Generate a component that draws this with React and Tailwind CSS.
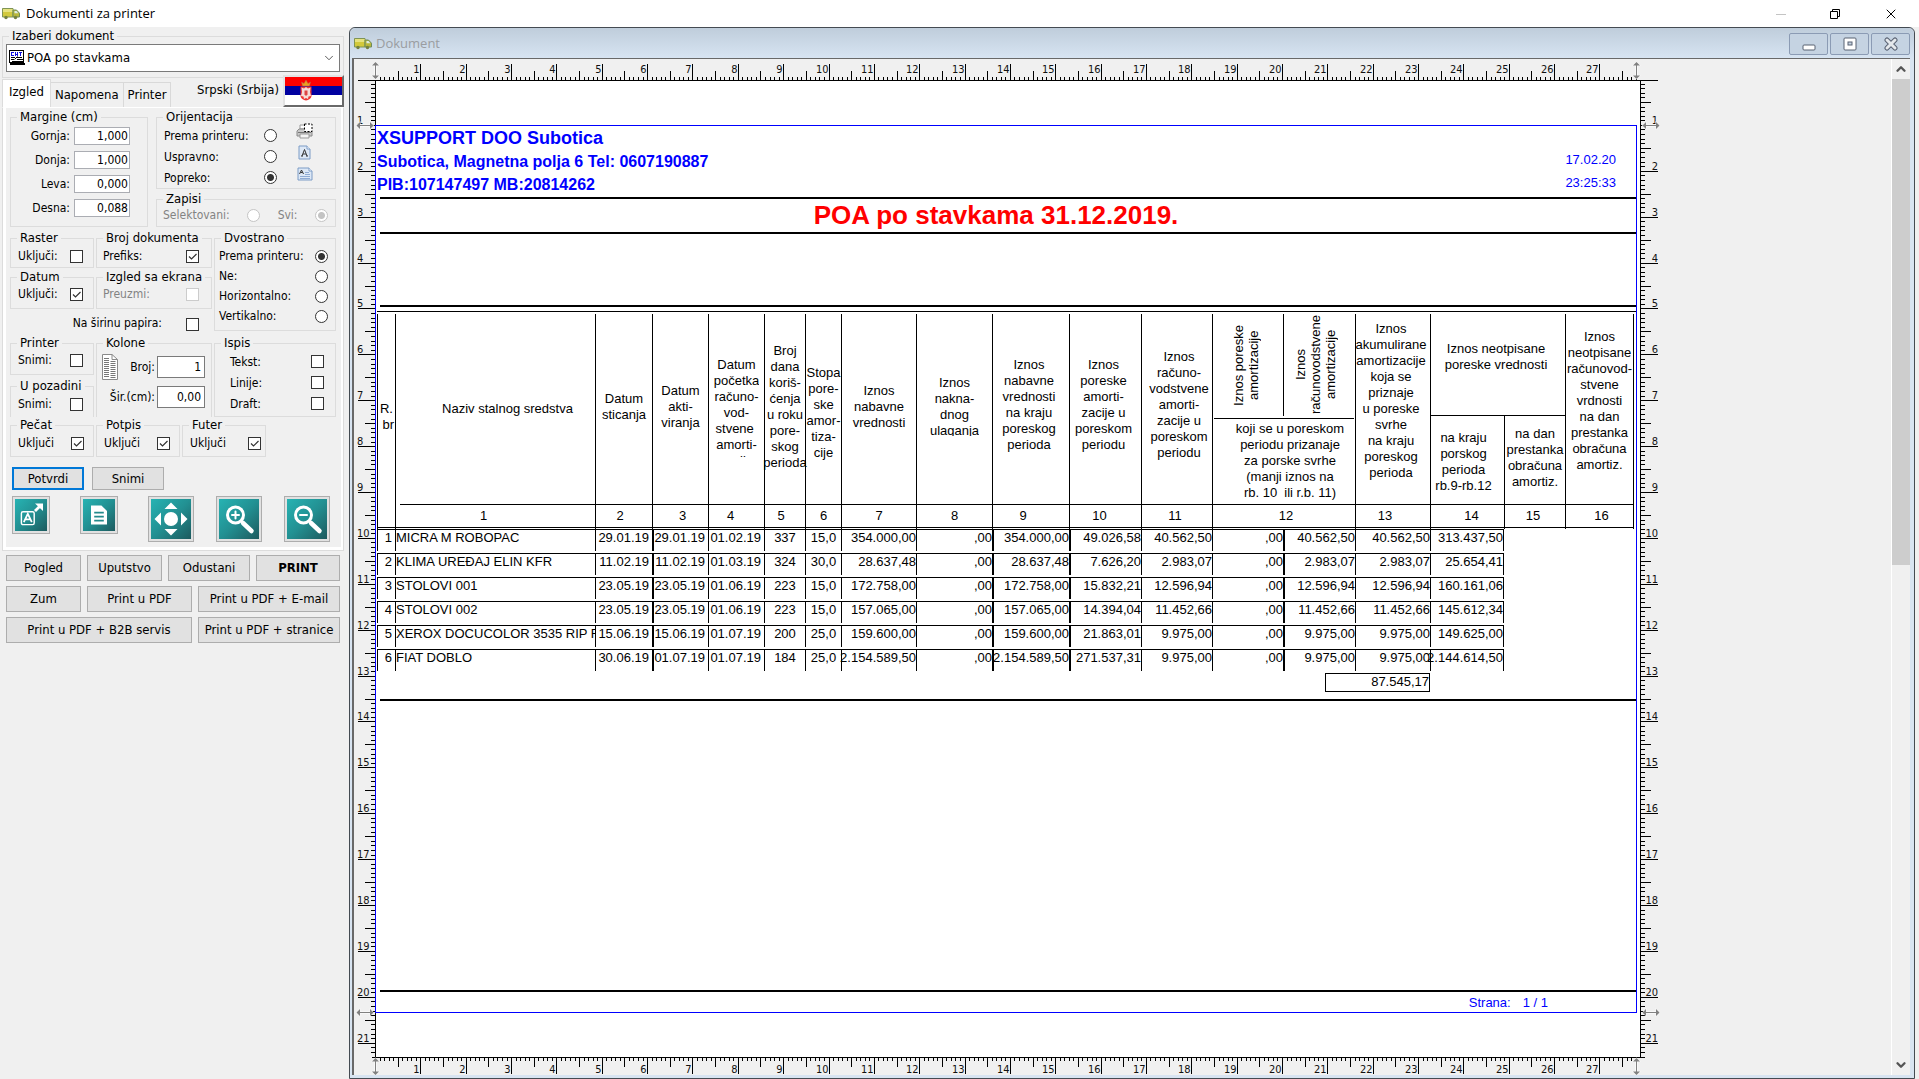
import React, { useState } from 'react';
import { ChevronDown, ChevronUp, X } from 'lucide-react';

const CM_X = 45.35;
const CM_Y = 45.89;

const COLUMN_WIDTHS = [18, 200, 57, 56, 56, 41, 36, 75, 76, 77, 72, 71, 71, 72, 75, 74, 61, 68];

const ROWS = [
  ['1', 'MICRA M ROBOPAC', '29.01.19', '29.01.19', '01.02.19', '337', '15,0', '354.000,00', ',00', '354.000,00', '49.026,58', '40.562,50', ',00', '40.562,50', '40.562,50', '313.437,50'],
  ['2', 'KLIMA UREĐAJ ELIN KFR', '11.02.19', '11.02.19', '01.03.19', '324', '30,0', '28.637,48', ',00', '28.637,48', '7.626,20', '2.983,07', ',00', '2.983,07', '2.983,07', '25.654,41'],
  ['3', 'STOLOVI 001', '23.05.19', '23.05.19', '01.06.19', '223', '15,0', '172.758,00', ',00', '172.758,00', '15.832,21', '12.596,94', ',00', '12.596,94', '12.596,94', '160.161,06'],
  ['4', 'STOLOVI 002', '23.05.19', '23.05.19', '01.06.19', '223', '15,0', '157.065,00', ',00', '157.065,00', '14.394,04', '11.452,66', ',00', '11.452,66', '11.452,66', '145.612,34'],
  ['5', 'XEROX DOCUCOLOR 3535 RIP FI', '15.06.19', '15.06.19', '01.07.19', '200', '25,0', '159.600,00', ',00', '159.600,00', '21.863,01', '9.975,00', ',00', '9.975,00', '9.975,00', '149.625,00'],
  ['6', 'FIAT DOBLO', '30.06.19', '01.07.19', '01.07.19', '184', '25,0', '2.154.589,50', ',00', '2.154.589,50', '271.537,31', '9.975,00', ',00', '9.975,00', '9.975,00', '2.144.614,50'],
];

const THICK_COLUMNS = [3, 9, 10, 13];

const cellAlign = (col) => {
  if (col === 0) return 'justify-end pr-[3px]';
  if (col === 1) return 'justify-start overflow-hidden';
  if (col < 5) return 'justify-end pr-[3px]';
  if (col < 7) return 'justify-center';
  return 'justify-end';
};

// numbered strip under the column titles
const COLUMN_NUMBERS = [
  { n: 1, cls: 'pr-6' },
  { n: 2, cls: 'pr-2' },
  { n: 3, cls: 'pl-1' },
  { n: 4, cls: 'pr-3' },
  { n: 5, cls: 'pr-2' },
  { n: 6, cls: '' },
  { n: 7, cls: '' },
  { n: 8, cls: '' },
  { n: 9, cls: 'pr-4' },
  { n: 10, cls: 'pr-3' },
  { n: 11, cls: 'pr-1' },
  { n: 12, cls: 'pl-1', span: 2 },
  { n: 13, cls: 'pr-4' },
  { n: 14, cls: 'pl-2' },
  { n: 15, cls: 'pr-1' },
  { n: 16, cls: 'pl-1' },
];

const TruckIcon = () => (
  <svg width="18" height="13" viewBox="0 0 18 13" className="shrink-0">
    <path d="M0.5 1.5h10.5v8.5H0.5z" fill="#d2c93c" stroke="#7f9455" />
    <path d="M1 2h9.5v3H1z" fill="#e6e27e" />
    <path d="M11 3h3.5l3 3.2V10H11z" fill="#b9b83a" stroke="#6c8a5c" />
    <path d="M12.5 4h2l1.8 2.2h-3.8z" fill="#dcebe8" />
    <circle cx="4" cy="10.5" r="1.7" fill="#74803e" />
    <circle cx="13.5" cy="10.5" r="1.7" fill="#74803e" />
  </svg>
);

const FlagIcon = () => (
  <svg width="57" height="28" viewBox="0 0 57 28">
    <rect width="57" height="9.5" fill="#f00" />
    <rect y="9" width="57" height="9.5" fill="#0000a0" />
    <rect y="18" width="57" height="10" fill="#fff" />
    <path d="M15.5 9.5h11v9c0 3-3 4.500-5.500 5c-2.500-.5-5.500-2-5.500-5z" fill="#e33" />
    <path d="M21 10l2 1.500 2.500-1-.5 4.500 1 4-2.500.5-.5 2.500-2-1-2 1-.5-2.500-2.500-.5 1-4-.5-4.500 2.500 1z" fill="#f4dcd8" />
    <path d="M19.500 13.500h3v4l-1.500 1.500-1.500-1.500z" fill="#d44" />
    <path d="M17.500 9l-1-4 2.500 1.500L21 3l2 3.500L25.500 5l-1 4z" fill="#e8a020" stroke="#b55" strokeWidth=".5" />
  </svg>
);

const ListIcon = () => (
  <svg width="17" height="15" viewBox="0 0 17 15" shapeRendering="crispEdges">
    <path d="M1.500.500h14v12h-14z" fill="#fff" stroke="#000" />
    <path d="M3 2h3v1H4v2h2v1H3zM7 2h1v2h1V2h1v4H9V5H8v1H7zM11 2h3v1h-1v3h-1V3h-1z" fill="#1010e0" />
    <path d="M3 7.500h4M9 7.500h5M3 9.500h3M9 9.500h6M4 11.500h11" stroke="#000" />
    <path d="M9.500 6.500L6.500 9.500" stroke="#000" shapeRendering="auto" />
    <path d="M2 14h15" stroke="#000" strokeWidth="2" />
  </svg>
);

const PrinterIcon = () => (
  <svg width="17" height="17" viewBox="0 0 17 17">
    <path d="M4 6V2h6v4z" fill="#fff" stroke="#999" />
    <path d="M1 8l2-2h11l2 2v5H1z" fill="#c9c9c9" stroke="#8a8a8a" />
    <path d="M2 9.500h13" stroke="#777" />
    <path d="M4 11h9v4H4z" fill="#f4f4f4" stroke="#999" />
    <rect x="8.500" y="1" width="7.500" height="7.500" fill="#fff" stroke="#000" strokeDasharray="2 1.500" />
  </svg>
);

const PortraitIcon = () => (
  <svg width="13" height="15" viewBox="0 0 13 15">
    <path d="M1 1h8l3 3v10H1z" fill="#dde8f6" stroke="#7d9cc6" />
    <path d="M9 1v3h3" fill="#fff" stroke="#7d9cc6" />
    <path d="M4 11l2.500-6.500L9 11M5 9h3M3 11h2M8 11h2" fill="none" stroke="#333" />
  </svg>
);

const LandscapeIcon = () => (
  <svg width="16" height="14" viewBox="0 0 16 14">
    <path d="M1 1h11l3 3v9H1z" fill="#dde8f6" stroke="#7d9cc6" />
    <path d="M12 1v3h3" fill="#fff" stroke="#7d9cc6" />
    <path d="M2.500 7L4.500 3l2 4M3.500 5.500h2" fill="none" stroke="#333" />
    <path d="M8 5.500h4M8 7.500h5M3 9.500h10M3 11.500h10" stroke="#8fabd3" />
  </svg>
);

const ColumnsIcon = () => (
  <svg width="16" height="26" viewBox="0 0 16 26">
    <path d="M.5.500h9.500l5.500 5V25.500H.5z" fill="#fff" stroke="#8a8a8a" />
    <path d="M10 .5v5h5.500" fill="none" stroke="#8a8a8a" />
    <path d="M4.500 4v20M11 7v17" stroke="#777" strokeWidth="5" strokeDasharray="1 1" />
  </svg>
);

const Teal = ({ size, children }) => (
  <svg width={size} height={size} viewBox="0 0 40 40">
    <defs>
      <linearGradient id={`teal${size}`} x1="0" y1="0" x2="1" y2="1">
        <stop offset="0" stopColor="#27b3b3" />
        <stop offset=".5" stopColor="#229092" />
        <stop offset="1" stopColor="#1d5a5e" />
      </linearGradient>
    </defs>
    <rect width="40" height="40" fill={`url(#teal${size})`} />
    {children}
  </svg>
);

const TOOLS = [
  {
    label: 'Font',
    size: 32,
    art: (
      <g fill="none" stroke="#fff">
        <rect x="8" y="16" width="16" height="16" rx="2" strokeWidth="1.800" />
        <path d="M11 29l5-10.500L21 29M13 25.500h6" strokeWidth="2.200" />
        <path d="M25 15l7-7" strokeWidth="3.500" />
        <path d="M25 5.500h10V15z" fill="#fff" stroke="none" />
      </g>
    ),
  },
  {
    label: 'Strana',
    size: 32,
    art: (
      <g>
        <path d="M10 8h13l7 7v17H10z" fill="#fff" />
        <path d="M14 17h12M14 22h12M14 27h12" stroke="#238a8c" strokeWidth="2.200" />
      </g>
    ),
  },
  {
    label: 'Pomeranje',
    size: 40,
    art: (
      <g fill="#fff">
        <circle cx="20" cy="20" r="7" />
        <path d="M20 3.500l6.500 6.500h-13zM20 36.500l6.500-6.500h-13zM3.500 20l6.500-6.500v13zM36.500 20L30 13.500v13z" />
      </g>
    ),
  },
  {
    label: 'Uvećaj',
    size: 40,
    art: (
      <g fill="none" stroke="#fff" strokeLinecap="round">
        <circle cx="16.500" cy="16" r="8" strokeWidth="3" />
        <path d="M24 24l8.500 8" strokeWidth="4.500" />
        <path d="M13 16h7M16.500 12.500v7" strokeWidth="2" />
      </g>
    ),
  },
  {
    label: 'Umanji',
    size: 40,
    art: (
      <g fill="none" stroke="#fff" strokeLinecap="round">
        <circle cx="16.500" cy="16" r="8" strokeWidth="3" />
        <path d="M24 24l8.500 8" strokeWidth="4.500" />
        <path d="M13 16h7" strokeWidth="2" />
      </g>
    ),
  },
];

const Group = ({ title, className = '', body = '', children }) => (
  <fieldset className={`min-w-0 border border-[#dcdcdc] ${className}`}>
    <legend className="ml-[6px] px-[3px] text-[13px] leading-4 whitespace-nowrap">{title}</legend>
    <div className={body}>{children}</div>
  </fieldset>
);

const CheckBox = ({ id, checked = false, disabled = false }) => {
  const [on, setOn] = useState(checked);
  return (
    <span className="relative block size-[13px] shrink-0">
      <input
        id={id}
        type="checkbox"
        checked={on}
        disabled={disabled}
        onChange={(e) => setOn(e.target.checked)}
        className="block size-[13px] appearance-none border border-[#333] bg-white disabled:border-[#ccc]"
      />
      {on && (
        <svg viewBox="0 0 13 13" className="pointer-events-none absolute inset-0 size-[13px]">
          <path d="M3 6.500l2.500 2.500L10.500 4" fill="none" stroke="#333" strokeWidth="1.200" />
        </svg>
      )}
    </span>
  );
};

const Radio = ({ id, name, value, defaultChecked, disabled }) => (
  <input
    id={id}
    type="radio"
    name={name}
    value={value}
    defaultChecked={defaultChecked}
    disabled={disabled}
    className="block size-[13px] shrink-0 appearance-none rounded-full border border-[#333] bg-white checked:bg-[radial-gradient(circle,#333_0,#333_3px,#fff_4px)] disabled:border-[#c4c4c4] disabled:checked:bg-[radial-gradient(circle,#c4c4c4_0,#c4c4c4_3px,#fff_4px)]"
  />
);

const CheckRow = ({ id, label, checked, disabled, className = '' }) => (
  <div className={`flex items-center justify-between ${className}`}>
    <label htmlFor={id} className={disabled ? 'text-[#838383]' : ''}>{label}</label>
    <CheckBox id={id} checked={checked} disabled={disabled} />
  </div>
);

const MarginField = ({ id, label, value }) => (
  <div className="flex items-center justify-end gap-1">
    <label htmlFor={id}>{label}</label>
    <input
      id={id}
      defaultValue={value}
      className="h-[18px] w-14 border border-[#abadb3] bg-white pr-px text-right outline-none"
    />
  </div>
);

const PushButton = ({ className = '', children }) => (
  <button type="button" className={`flex items-center justify-center border border-[#adadad] bg-[#e1e1e1] text-[13px] whitespace-nowrap hover:bg-[#e5f1fb] ${className}`}>
    {children}
  </button>
);

const SidePanel = () => {
  const [tab, setTab] = useState('Izgled');

  return (
    <aside className="w-[349px] shrink-0 pt-px pr-[5px] pl-[2px] font-['DejaVu_Sans_Condensed','DejaVu_Sans',sans-serif] text-[12px] leading-4">
      <Group title={<label htmlFor="dokument">Izaberi dokument</label>} className="h-[50px]" body="px-[3px]">
        <div className="relative">
          <select id="dokument" className="block h-7 w-full appearance-none border border-[#7a7a7a] bg-white pl-5 text-[13px] outline-none">
            <option>POA po stavkama</option>
          </select>
          <span className="pointer-events-none absolute left-[2px] top-[6px]"><ListIcon /></span>
          <ChevronDown className="pointer-events-none absolute right-1 top-[7px] size-3.5 text-[#444]" strokeWidth={1.5} />
        </div>
      </Group>

      <div className="flex h-[29px] items-end">
        <div role="tablist" className="flex items-end text-[13px]">
          {['Izgled', 'Napomena', 'Printer'].map((name) => (
            <button
              key={name}
              type="button"
              role="tab"
              aria-selected={tab === name}
              onClick={() => setTab(name)}
              className={tab === name
                ? 'h-7 border border-b-0 border-[#dcdcdc] bg-white px-[6px] pb-1'
                : 'h-[25px] border border-b-0 border-l-0 border-[#d9d9d9] bg-[#f0f0f0] px-1'}
            >
              {name}
            </button>
          ))}
        </div>
        <span className="ml-auto mr-1 self-start pt-1 text-[13px]">Srpski (Srbija)</span>
        <button type="button" aria-label="Jezik" className="h-8 border-2 border-t-[#e3e3e3] border-l-[#e3e3e3] border-r-[#696969] border-b-[#696969]">
          <FlagIcon />
        </button>
      </div>

      <div className="border border-[#dcdcdc] border-t-white">
        <div className="border-[3px] border-r-2 border-t-0 border-white pl-[4px] pr-[5px] pt-px pb-[5px]">
          <div className="flex gap-2">
            <Group title="Margine (cm)" className="h-[118px] w-[138px]" body="flex flex-col gap-[6px] pt-[2px] pr-[17px]">
              <MarginField id="gornja" label="Gornja:" value="1,000" />
              <MarginField id="donja" label="Donja:" value="1,000" />
              <MarginField id="leva" label="Leva:" value="0,000" />
              <MarginField id="desna" label="Desna:" value="0,088" />
            </Group>
            <div className="flex flex-1 flex-col gap-[2px]">
              <Group title="Orijentacija" className="h-20" body="pl-[7px] pr-[22px]">
                {[
                  ['o-printer', 'Prema printeru:', <PrinterIcon />],
                  ['o-uspravno', 'Uspravno:', <PortraitIcon />],
                  ['o-popreko', 'Popreko:', <LandscapeIcon />],
                ].map(([id, label, icon], i) => (
                  <div key={id} className="flex h-[21px] items-center">
                    <label htmlFor={id} className="flex-1">{label}</label>
                    <Radio id={id} name="orijentacija" value={id} defaultChecked={i === 2} />
                    <span className="flex w-9 justify-end pb-2">
                      <span className="flex w-[17px] justify-center">{icon}</span>
                    </span>
                  </div>
                ))}
              </Group>
              <Group title="Zapisi" className="h-9" body="flex items-center justify-between pl-[6px] pr-[7px] text-[#838383]">
                <label htmlFor="selektovani">Selektovani:</label>
                <Radio id="selektovani" name="zapisi" value="selektovani" disabled />
                <label htmlFor="svi">Svi:</label>
                <Radio id="svi" name="zapisi" value="svi" defaultChecked disabled />
              </Group>
            </div>
          </div>

          <div className="mt-[3px] flex gap-[2px]">
            <div className="w-[202px]">
              <div className="flex gap-[2px]">
                <Group title="Raster" className="h-[38px] w-[84px]" body="pl-[7px] pr-[10px]">
                  <CheckRow id="raster" label="Uključi:" className="h-5" />
                </Group>
                <Group title="Broj dokumenta" className="h-[38px] flex-1" body="pl-[6px] pr-[12px]">
                  <CheckRow id="prefiks" label="Prefiks:" checked className="h-5" />
                </Group>
              </div>
              <div className="mt-px flex gap-[2px]">
                <Group title="Datum" className="h-10 w-[84px]" body="pl-[7px] pr-[10px]">
                  <CheckRow id="datum" label="Uključi:" checked className="h-[18px]" />
                </Group>
                <Group title="Izgled sa ekrana" className="h-10 flex-1" body="pl-[6px] pr-[12px]">
                  <CheckRow id="preuzmi" label="Preuzmi:" disabled className="h-[18px]" />
                </Group>
              </div>
              <div className="flex h-[22px] items-end justify-end gap-6 pr-[13px]">
                <label htmlFor="sirina">Na širinu papira:</label>
                <CheckBox id="sirina" />
              </div>
            </div>
            <Group title="Dvostrano" className="h-[101px] flex-1" body="pl-1 pr-[7px]">
              {['Prema printeru:', 'Ne:', 'Horizontalno:', 'Vertikalno:'].map((label, i) => (
                <div key={label} className="flex h-5 items-center justify-between">
                  <label htmlFor={`dvo-${i}`}>{label}</label>
                  <Radio id={`dvo-${i}`} name="dvostrano" value={label} defaultChecked={i === 0} />
                </div>
              ))}
            </Group>
          </div>

          <div className="mt-1 flex gap-[2px]">
            <div className="flex w-[84px] flex-col gap-[3px]">
              <Group title="Printer" className="h-10" body="pl-[7px] pr-[10px]">
                <CheckRow id="snimi-p" label="Snimi:" className="h-[18px]" />
              </Group>
              <Group title="U pozadini" className="h-[39px] border-b-0" body="pl-[7px] pr-[10px]">
                <CheckRow id="snimi-u" label="Snimi:" className="h-5" />
              </Group>
            </div>
            <Group title="Kolone" className="h-[82px] w-[116px] border-b-0" body="pl-[5px] pr-[6px]">
              <div className="flex justify-between pt-[3px]">
                <ColumnsIcon />
                <div className="flex items-center gap-[2px]">
                  <label htmlFor="broj">Broj:</label>
                  <input id="broj" defaultValue="1" className="h-[22px] w-12 border border-[#7a7a7a] bg-white pr-[3px] text-right outline-none" />
                </div>
              </div>
              <div className="flex items-center justify-end gap-[2px] pt-[6px]">
                <label htmlFor="sir">Šir.(cm):</label>
                <input id="sir" defaultValue="0,00" className="h-[22px] w-12 border border-[#7a7a7a] bg-white pr-[3px] text-right outline-none" />
              </div>
            </Group>
            <Group title="Ispis" className="h-[82px] flex-1" body="pl-[15px] pr-[11px]">
              <CheckRow id="tekst" label="Tekst:" className="h-[21px]" />
              <CheckRow id="linije" label="Linije:" className="h-[21px]" />
              <CheckRow id="draft" label="Draft:" className="h-[21px]" />
            </Group>
          </div>

          <div className="flex gap-[2px]">
            <Group title="Pečat" className="h-10 w-[84px]" body="pl-[7px] pr-[9px]">
              <CheckRow id="pecat" label="Uključi" checked className="h-5" />
            </Group>
            <Group title="Potpis" className="h-10 w-[84px]" body="pl-[7px] pr-[9px]">
              <CheckRow id="potpis" label="Uključi" checked className="h-5" />
            </Group>
            <Group title="Futer" className="h-10 w-[84px]" body="pl-[7px] pr-1">
              <CheckRow id="futer" label="Uključi" checked className="h-5" />
            </Group>
          </div>

          <div className="flex gap-2 px-[2px] pt-[10px]">
            <button type="button" className="h-[23px] w-[72px] border-2 border-[#0078d7] bg-[#e1e1e1] text-[13px]">Potvrdi</button>
            <PushButton className="h-[23px] w-[72px]">Snimi</PushButton>
          </div>
          <div className="flex items-start gap-[22px] pt-[6px] pl-[2px]">
            {TOOLS.map((tool) => (
              <button
                key={tool.label}
                type="button"
                aria-label={tool.label}
                className={`border border-[#adadad] bg-[#e1e1e1] p-[2px] ${tool.size === 32 ? 'mr-2' : ''}`}
              >
                <Teal size={tool.size}>{tool.art}</Teal>
              </button>
            ))}
          </div>
        </div>
      </div>

      <div className="flex flex-col gap-[5px] px-1 pt-1">
        <div className="flex gap-[6px]">
          <PushButton className="h-[26px] w-[75px]">Pogled</PushButton>
          <PushButton className="h-[26px] w-[75px]">Uputstvo</PushButton>
          <PushButton className="h-[26px] w-[82px]">Odustani</PushButton>
          <PushButton className="h-[26px] flex-1 font-bold">PRINT</PushButton>
        </div>
        <div className="flex gap-[6px]">
          <PushButton className="h-[26px] w-[75px]">Zum</PushButton>
          <PushButton className="h-[26px] w-[105px]">Print u PDF</PushButton>
          <PushButton className="h-[26px] flex-1">Print u PDF + E-mail</PushButton>
        </div>
        <div className="flex gap-[6px]">
          <PushButton className="h-[26px] w-[186px]">Print u PDF + B2B servis</PushButton>
          <PushButton className="h-[26px] flex-1">Print u PDF + stranice</PushButton>
        </div>
      </div>
    </aside>
  );
};

const tickLength = (mm) => (mm % 10 === 0 ? 17 : mm % 5 === 0 ? 10 : 4);

// double-headed margin handle, drawn around its own centre
const Handle = ({ x, y, vertical }) => (
  <g transform={`translate(${x} ${y})${vertical ? ' rotate(90)' : ''}`} shapeRendering="auto">
    <path d="M-9 0L-4.500 -4.500V-1.500H4.500V-4.500L9 0L4.500 4.500V1.500H-4.500V4.500Z" fill="#f8f8f8" />
    <path d="M-8.500 0L-5 -3.500V3.500ZM8.500 0L5 -3.500V3.500Z" fill="#808080" />
    <path d="M-6 0H6" stroke="#808080" />
  </g>
);

const HorizontalRuler = ({ bottom = false }) => {
  const ticks = Array.from({ length: 278 }, (_, i) => i + 1);
  return (
    <svg width="1310" height={bottom ? 18 : 22} className="block shrink-0 font-['DejaVu_Sans_Condensed','DejaVu_Sans',sans-serif] text-[11px]" shapeRendering="crispEdges">
      <path d={bottom ? 'M18 .5H1291' : 'M4 21.500H1304'} stroke="#000" />
      {ticks.map((mm) => {
        const x = Math.round(21 + (mm * CM_X) / 10) + 0.5;
        const len = tickLength(mm);
        return (
          <React.Fragment key={mm}>
            <path d={bottom ? `M${x} 0V${len}` : `M${x} ${22 - len}V22`} stroke="#000" />
            {mm % 10 === 0 && (
              <text x={x - 1} y={bottom ? 16 : 14} textAnchor="end" fill="#111">{mm / 10}</text>
            )}
          </React.Fragment>
        );
      })}
      <Handle x={21.5} y={bottom ? 9.5 : 11.5} vertical />
      <Handle x={1282.5} y={bottom ? 9.5 : 11.5} vertical />
    </svg>
  );
};

const VerticalRuler = ({ right = false }) => {
  const ticks = Array.from({ length: 212 }, (_, i) => i + 1);
  return (
    <svg width={right ? 22 : 21} height="976" className="block shrink-0 font-['DejaVu_Sans_Condensed','DejaVu_Sans',sans-serif] text-[11px]" shapeRendering="crispEdges">
      {right && <path d="M.5 0V976" stroke="#000" />}
      {ticks.map((mm) => {
        const y = Math.round((mm * CM_Y) / 10 - 2) + 0.5;
        const len = tickLength(mm);
        return (
          <React.Fragment key={mm}>
            <path d={right ? `M0 ${y}H${len + 1}` : `M${21 - len} ${y}H21`} stroke="#000" />
            {mm % 10 === 0 && (
              <text x={right ? 18 : 3} y={y - 2} textAnchor={right ? 'end' : 'start'} fill="#111">{mm / 10}</text>
            )}
          </React.Fragment>
        );
      })}
      <Handle x={right ? 11 : 11} y={44.500} />
      <Handle x={right ? 11 : 11} y={931.500} />
    </svg>
  );
};

const Lines = ({ items, className = '' }) => (
  <div className={className}>
    {items.map((line) => (
      <div key={line} className="whitespace-pre">{line}</div>
    ))}
  </div>
);

const HeadCell = ({ items, clip = '', className = '', ...rest }) => (
  <th className={`border-l border-black p-0 text-center font-normal ${className}`} {...rest}>
    <div className="flex justify-center">
      <Lines items={items} className={clip} />
    </div>
  </th>
);

const AssetTable = () => (
  <div className="ml-px border-t border-black pt-[2px]">
    <table className="w-[1257px] table-fixed border-separate border-spacing-0 border-black text-[13px] leading-4">
      <colgroup>
        {COLUMN_WIDTHS.map((w, i) => (
          <col key={i} style={{ width: w }} />
        ))}
        <col style={{ width: 1 }} />
      </colgroup>
      <thead>
        <tr className="h-[102px]">
          <HeadCell rowSpan={2} className="pt-4" items={['R.', ' br']} />
          <HeadCell rowSpan={2} className="pl-6" items={['Naziv stalnog sredstva']} />
          <HeadCell rowSpan={2} className="pb-1" items={['Datum', 'sticanja']} />
          <HeadCell rowSpan={2} className="pb-1" items={['Datum', 'akti-', 'viranja']} />
          <HeadCell rowSpan={2} className="pb-1" items={['Datum', 'početka', 'računo-', 'vod-', 'stvene ', 'amorti-', 'zacije']} clip="h-[100px] overflow-hidden" />
          <HeadCell rowSpan={2} className="pb-1" items={['Broj', 'dana', 'koriš-', 'ćenja', 'u roku', 'pore-', 'skog', 'perioda']} />
          <HeadCell rowSpan={2} className="pt-2" items={['Stopa', 'pore-', 'ske', 'amor-', 'tiza-', 'cije']} />
          <HeadCell rowSpan={2} className="pb-1" items={['Iznos', 'nabavne', 'vrednosti']} />
          <HeadCell rowSpan={2} className="pb-2" items={['Iznos', 'nakna-', 'dnog', 'ulaganja']} clip="h-[61px] overflow-hidden" />
          <HeadCell rowSpan={2} className="pr-1 pb-2" items={['Iznos', 'nabavne', 'vrednosti', 'na kraju', 'poreskog', 'perioda']} />
          <HeadCell rowSpan={2} className="pr-1 pb-2" items={['Iznos', 'poreske', 'amorti-', 'zacije u', 'poreskom', 'periodu']} />
          <HeadCell rowSpan={2} className="pb-2 pl-1" items={['Iznos', 'računo-', 'vodstvene', 'amorti-', 'zacije u', 'poreskom', 'periodu']} />
          <HeadCell className="pr-1" items={['Iznos poreske', 'amortizacije']} clip="rotate-180 leading-[15px] [writing-mode:vertical-rl]" />
          <HeadCell className="pr-2" items={['Iznos', 'računovodstvene', 'amortizacije']} clip="rotate-180 leading-[15px] [writing-mode:vertical-rl]" />
          <HeadCell rowSpan={2} className="pr-1 pb-4" items={['Iznos', 'akumulirane', 'amortizacije', 'koja se', 'priznaje', 'u poreske', 'svrhe', 'na kraju', 'poreskog', 'perioda']} />
          <HeadCell colSpan={2} className="border-b pr-1 pb-4" items={['Iznos neotpisane', 'poreske vrednosti']} />
          <HeadCell rowSpan={2} className="pb-4" items={['Iznos', 'neotpisane', 'računovod-', 'stvene', 'vrdnosti', 'na dan', 'prestanka', 'obračuna', 'amortiz.']} />
          <th rowSpan={2} className="border-l border-black p-0" />
        </tr>
        <tr className="h-[88px]">
          <th colSpan={2} className="border-l border-black p-0 align-top font-normal">
            <div className="mx-px mt-[2px] border-t border-black pt-[2px] pl-3">
              <Lines items={['koji se u poreskom', 'periodu prizanaje', 'za porske svrhe', '(manji iznos na', 'rb. 10  ili r.b. 11)']} />
            </div>
          </th>
          <HeadCell items={['na kraju', 'porskog', 'perioda', 'rb.9-rb.12']} className="pt-1 pr-2" />
          <HeadCell items={['na dan', 'prestanka', 'obračuna', 'amortiz.']} className="pb-1" />
        </tr>
        <tr className="h-[25px]">
          <th className="border-l border-black p-0 align-top font-normal">
            <div className="h-6 border-b border-black" />
          </th>
          {COLUMN_NUMBERS.map(({ n, cls, span = 1 }) => (
            <th key={n} colSpan={span} className="border-l border-black p-0 align-top font-normal">
              <div className={n === 1 ? 'ml-1 border-t border-black' : 'border-t border-black'} />
              <div className="h-[23px] border-b border-black pt-[3px]">
                <div className={cls}>{n}</div>
              </div>
            </th>
          ))}
          <th className="border-l border-black p-0 align-top">
            <div className="h-6 border-b border-black" />
          </th>
        </tr>
      </thead>
      <tbody>
        {ROWS.map((row) => (
          <tr key={row[0]} className="h-6">
            {row.map((value, col) => (
              <td key={col} className="border-t border-black p-0 align-top">
                <div className={`flex h-[21px] border-black leading-4 whitespace-nowrap ${THICK_COLUMNS.includes(col) ? 'border-l-2' : 'border-l'} ${col === 15 ? 'border-r' : ''} ${cellAlign(col)}`}>
                  {value}
                </div>
              </td>
            ))}
          </tr>
        ))}
      </tbody>
      <tfoot>
        <tr>
          <td colSpan={15} className="p-0">
            <div className="ml-auto h-[19px] w-[105px] border border-black text-right">87.545,17</div>
          </td>
        </tr>
      </tfoot>
    </table>
  </div>
);

const Report = () => (
  <div className="-ml-px mt-[44px] flex h-[888px] w-[1262px] flex-col border border-[#0000ff] font-['Liberation_Sans',Arial,sans-serif]">
    <header className="flex h-[71px] justify-between text-[#0000ff]">
      <div className="pt-px pl-px text-base leading-[23px] font-bold">
        <p className="text-lg leading-[23px]">XSUPPORT DOO Subotica</p>
        <p>Subotica, Magnetna polja 6 Tel: 0607190887</p>
        <p>PIB:107147497 MB:20814262</p>
      </div>
      <div className="pr-5 pt-[22px] text-right text-[13px] leading-[23px]">
        <p>17.02.20</p>
        <p>23:25:33</p>
      </div>
    </header>
    <h1 className="ml-1 h-[37px] border-y-2 border-black pr-6 text-center text-[26px] leading-[33px] font-bold text-[#ff0000]">
      POA po stavkama 31.12.2019.
    </h1>
    <div className="ml-1 h-[73px] border-b-2 border-black" />
    <div className="flex-1 pt-1">
      <AssetTable />
      <div className="mt-[7px] ml-1 border-t-2 border-black" />
    </div>
    <footer className="ml-1 flex h-[22px] justify-end gap-3 border-t-2 border-black pr-[88px] text-[13px] leading-[22px] text-[#0000ff]">
      <span>Strana:</span>
      <span>1 / 1</span>
    </footer>
  </div>
);

const ChildButton = ({ label, children }) => (
  <button type="button" aria-label={label} className="flex h-[22px] w-[39px] items-center justify-center rounded-[2px] border border-[#8b9bb4] bg-[#c5d3e2]">
    {children}
  </button>
);

const DocumentWindow = () => (
  <section className="mr-1 flex min-w-0 flex-1 flex-col rounded-t-md border border-[#444b52] bg-[#d8e4f1]">
    <div className="flex h-[30px] items-center justify-between rounded-t-md bg-linear-to-b from-[#bfcddb] to-[#d7e4f2] pt-px pr-1 pl-1">
      <div className="flex items-center gap-1">
        <TruckIcon />
        <span className="font-['Open_Sans',sans-serif] text-[13px] text-[#9a9da1]">Dokument</span>
      </div>
      <div className="flex gap-[2px]">
        <ChildButton label="Minimize">
          <svg width="14" height="14"><rect x="1" y="8" width="12" height="5" rx="1" fill="#fff" stroke="#596273" /></svg>
        </ChildButton>
        <ChildButton label="Restore">
          <svg width="14" height="14">
            <rect x="1" y="1" width="12" height="12" rx="1" fill="#fff" stroke="#596273" />
            <rect x="5" y="5" width="4" height="3" fill="#c5d3e2" stroke="#596273" />
          </svg>
        </ChildButton>
        <ChildButton label="Close">
          <svg width="14" height="14">
            <path d="M3 3l8 8M11 3l-8 8" stroke="#596273" strokeWidth="5" strokeLinecap="round" />
            <path d="M3 3l8 8M11 3l-8 8" stroke="#e4e8ec" strokeWidth="3" strokeLinecap="round" />
          </svg>
        </ChildButton>
      </div>
    </div>
    <div className="mr-1 mb-[3px] ml-[2px] flex min-h-0 flex-1 overflow-hidden border-t border-l-2 border-[#696969] bg-[#f0f0f0]">
      <div className="min-w-0 flex-1 overflow-hidden">
        <HorizontalRuler />
        <div className="flex">
          <VerticalRuler />
          <div className="h-[976px] w-[1265px] shrink-0 border-l border-black bg-white">
            <Report />
          </div>
          <VerticalRuler right />
        </div>
        <HorizontalRuler bottom />
      </div>
      <div className="flex w-[19px] flex-col items-center border-l border-white">
        <ChevronUp className="my-[3px] size-[14px] text-[#555]" strokeWidth={4} />
        <div className="h-[486px] w-[18px] bg-[#cdcdcd]" />
        <ChevronDown className="mt-auto mb-[3px] size-[14px] text-[#555]" strokeWidth={4} />
      </div>
    </div>
  </section>
);

const App = () => (
  <div className="flex h-screen min-h-[1079px] flex-col overflow-hidden bg-[#f0f0f0] text-black">
    <div className="flex h-[27px] shrink-0 items-center justify-between bg-white pr-5 pl-[2px]">
      <div className="flex items-center gap-[6px]">
        <TruckIcon />
        <h2 className="font-['Open_Sans',sans-serif] text-[13px]">Dokumenti za printer</h2>
      </div>
      <div className="flex items-center gap-[42px]">
        <button type="button" aria-label="Minimize">
          <svg width="12" height="12"><path d="M1 6.500h10" stroke="#c4c4c4" /></svg>
        </button>
        <button type="button" aria-label="Restore">
          <svg width="12" height="12" fill="none" stroke="#000">
            <path d="M1.500 3.500h7v7h-7zM3.500 3V1.500h7v7H9" />
          </svg>
        </button>
        <button type="button" aria-label="Close">
          <X className="size-4" strokeWidth={1.5} />
        </button>
      </div>
    </div>
    <div className="flex min-h-0 flex-1">
      <SidePanel />
      <DocumentWindow />
    </div>
  </div>
);

export default App;
